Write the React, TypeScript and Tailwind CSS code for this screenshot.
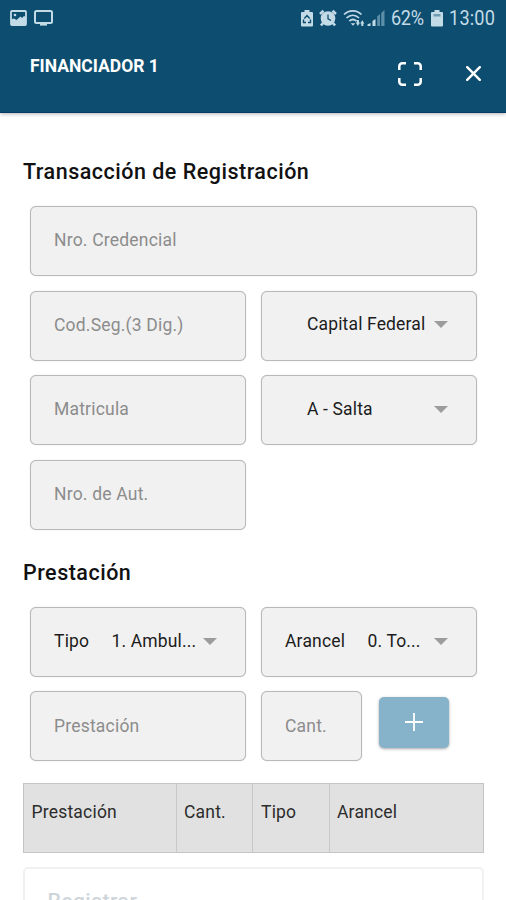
import React from "react";

interface FieldProps {
  label: string;
  className?: string;
}

interface SelectFieldProps {
  label?: string;
  value: string;
  labelClass?: string;
}

const boxClass =
  "flex h-[70px] items-center rounded-[6px] border border-[#b9b9b9] bg-[#f1f1f1] pl-[23px] shadow-[0_0_1px_rgba(0,0,0,0.25)]";

const Field: React.FC<FieldProps> = ({ label, className = "" }) => (
  <div className={`${boxClass} pb-px text-[#8c8c8c] ${className}`}>
    <span>{label}</span>
  </div>
);

const SelectField: React.FC<SelectFieldProps> = ({
  label,
  value,
  labelClass = "",
}) => (
  <div className={`${boxClass} pr-[28.5px] pb-[2px] text-[#1c1c1c]`}>
    <span className={`shrink-0 ${labelClass}`}>{label}</span>
    <span className="grow whitespace-nowrap tracking-[0.15px]">{value}</span>
    <svg width="14" height="7" viewBox="0 0 14 7" className="shrink-0">
      <path d="M0 0h14L7 7z" fill="#9c9c9c" />
    </svg>
  </div>
);

const StatusBar: React.FC = () => (
  <div className="flex h-[36px] items-center pl-[10px] pr-[11px] text-[#c3dbe7]">
    <svg width="17" height="16" viewBox="0 0 17 16">
      <rect x="1" y="1" width="15" height="14" rx="1" fill="none" stroke="currentColor" strokeWidth="1.8" />
      <path d="M1 15V9.500l3-1 2.500 1.500 4-3.500 1.500 1.500 2-2 2 1v8z" fill="currentColor" />
      <circle cx="5" cy="5" r="1.3" fill="currentColor" />
    </svg>
    <svg width="19" height="16" viewBox="0 0 19 16" className="ml-[7px]">
      <rect x="1" y="1" width="17" height="12" rx="1.5" fill="none" stroke="currentColor" strokeWidth="2" />
      <path d="M6 13h7v2.6H6z" fill="currentColor" />
    </svg>

    <div className="ml-auto flex items-center">
      {/* battery saver */}
      <svg width="12" height="18" viewBox="0 0 12 18">
        <path d="M3.5 1h5v2H11a1 1 0 0 1 1 1v12.500a1 1 0 0 1-1 1H1a1 1 0 0 1-1-1V4a1 1 0 0 1 1-1h2.500z" fill="currentColor" />
        <path d="M3.300 9.500 6 6.500l2.700 3M2.500 10.500v3H5M9.500 10.500v3H7" fill="none" stroke="#0d4e70" strokeWidth="1.400" />
      </svg>
      {/* alarm */}
      <svg width="18" height="18" viewBox="0 0 18 18" className="ml-[6px]">
        <circle cx="9" cy="9.500" r="7.300" fill="currentColor" />
        <path d="M1 5 4.500 1.800M17 5l-3.500-3.200M4 14l-2 2.500M14 14l2 2.500" stroke="currentColor" strokeWidth="2.600" />
        <path d="M9 5.500v4.300l3 1.700" fill="none" stroke="#0d4e70" strokeWidth="1.300" />
      </svg>
      {/* wifi with traffic arrows */}
      <svg width="23" height="18" viewBox="0 0 23 18" className="ml-[6px]">
        <g fill="none" stroke="currentColor" strokeWidth="1.700">
          <path d="M1 5.500C6 .6 13.500.6 18.500 5.500" />
          <path d="M3.500 9c3.700-3.700 8.900-3.700 12.600 0" />
          <path d="M6.300 12.200c2.200-2.200 5-2.200 7.200 0" />
        </g>
        <path d="M7.700 14.200h4.600L10 16.800z" fill="currentColor" />
        <path d="M12.800 13.500H17L14.900 17zM17.200 14.500l2.100-3.300 2.100 3.300zM18.300 14.500h2V17h-2zM13.900 11h2v2.500h-2z" fill="currentColor" />
      </svg>
      {/* signal */}
      <svg width="18" height="18" viewBox="0 0 18 18" className="ml-px">
        <path d="M.5 17v-1.500l3-1.500v3z" fill="currentColor" />
        <path d="M5.500 17v-5l3-2v7z" fill="currentColor" />
        <path d="M10.200 17V7.500L13 5v12zM14.200 17V4l3.300-3v16z" fill="#5c8ea8" />
      </svg>
      <span className="ml-[6px] w-[34px] origin-left scale-x-[0.93] pt-px text-[19.5px] leading-none tracking-[-0.400px]">62%</span>
      <svg width="12" height="18" viewBox="0 0 12 18" className="ml-[6px]">
        <path d="M3.5 1h5v2H11a1 1 0 0 1 1 1v12.500a1 1 0 0 1-1 1H1a1 1 0 0 1-1-1V4a1 1 0 0 1 1-1h2.500z" fill="currentColor" />
        <path d="M2.500 5h7v2.500h-7z" fill="#6f9bb2" />
      </svg>
      <span className="ml-[6px] w-[46px] origin-left scale-x-[0.93] whitespace-nowrap pt-px text-[19.5px] leading-none">13:00</span>
    </div>
  </div>
);

const Header: React.FC = () => (
  <header className="h-[113px] border-b border-[#073a60] bg-[#0d4e70] shadow-[0_1px_4px_rgba(0,0,0,0.3)]">
    <StatusBar />
    <div className="flex pl-[30px] pr-[25px] text-white">
      <h1 className="mt-[19px] text-[17.5px] leading-[22px] font-bold tracking-normal">FINANCIADOR 1</h1>
      <svg width="24" height="24" viewBox="0 0 24 24" className="mt-[26px] ml-auto">
        <path
          d="M1.300 8V4.300a3 3 0 0 1 3-3H8M16 1.300h3.700a3 3 0 0 1 3 3V8M22.700 16v3.700a3 3 0 0 1-3 3H16M8 22.700H4.300a3 3 0 0 1-3-3V16"
          fill="none"
          stroke="currentColor"
          strokeWidth="2.500"
        />
      </svg>
      <svg width="15" height="15" viewBox="0 0 15 15" className="mt-[30px] ml-[44px]">
        <path d="m1.200 1.200 12.600 12.600M13.800 1.200 1.200 13.800" stroke="currentColor" strokeWidth="2.400" strokeLinecap="round" />
      </svg>
    </div>
  </header>
);

export default function App() {
  return (
    <div className="h-[900px] w-[506px] overflow-hidden bg-white font-[Roboto,sans-serif] text-[17.5px] tracking-[0.2px]">
      <Header />

      <main className="px-[23px] pt-[45px]">
        <h2 className="h-[48px] text-[21.5px] leading-[28px] font-medium tracking-[0.5px] text-[#111111]">
          Transacción de Registración
        </h2>
        <div className="ml-[7px] grid w-[447px] grid-cols-2 gap-x-[15px] gap-y-[14.5px]">
          <Field label="Nro. Credencial" className="col-span-2" />
          <Field label="Cod.Seg.(3 Dig.)" />
          <SelectField value="Capital Federal" labelClass="w-[22px]" />
          <Field label="Matricula" />
          <SelectField value="A - Salta" labelClass="w-[22px]" />
          <Field label="Nro. de Aut." />
        </div>

        <h2 className="mt-[29.5px] h-[48px] text-[21.5px] leading-[28px] font-medium tracking-[0.5px] text-[#111111]">
          Prestación
        </h2>
        <div className="ml-[7px] grid w-[447px] grid-cols-2 gap-x-[15px] gap-y-[14.4px]">
          <SelectField label="Tipo" value="1. Ambul..." labelClass="w-[57.5px] pt-px" />
          <SelectField label="Arancel" value="0. To..." labelClass="w-[82.5px] pt-px" />
          <Field label="Prestación" />
          <div className="flex gap-[16.5px]">
            <Field label="Cant." className="w-[101px]" />
            <button className="mt-[5.5px] flex h-[51px] w-[70.5px] items-center justify-center rounded-[5px] bg-[#86b3c9] shadow-[0_1px_3px_rgba(0,0,0,0.35)]">
              <svg width="18" height="18" viewBox="0 0 18 18">
                <path d="M9 0v18M0 9h18" stroke="#fff" strokeWidth="1.800" />
              </svg>
            </button>
          </div>
        </div>

        {/* items table header */}
        <div className="mt-[21.7px] grid h-[70px] w-[461px] grid-cols-[152px_76px_77px_1fr] border border-[#c4c4c4] bg-[#e1e1e1] leading-[56px] text-[#2c2c2c]">
          <span className="pl-[7.5px]">Prestación</span>
          <span className="border-l border-[#c8c8c8] pl-[7px]">Cant.</span>
          <span className="border-l border-[#c8c8c8] pl-[8px]">Tipo</span>
          <span className="border-l border-[#c8c8c8] pl-[7px]">Arancel</span>
        </div>

        <div className="mt-[14px] h-[70px] w-[461px] rounded-[5px] border-2 border-[#f1f1f1] pt-[19px] pl-[22.5px] text-[21px] leading-[27px] font-medium tracking-[0.5px] text-[#ced5da]">
          Registrar
        </div>
      </main>
    </div>
  );
}
